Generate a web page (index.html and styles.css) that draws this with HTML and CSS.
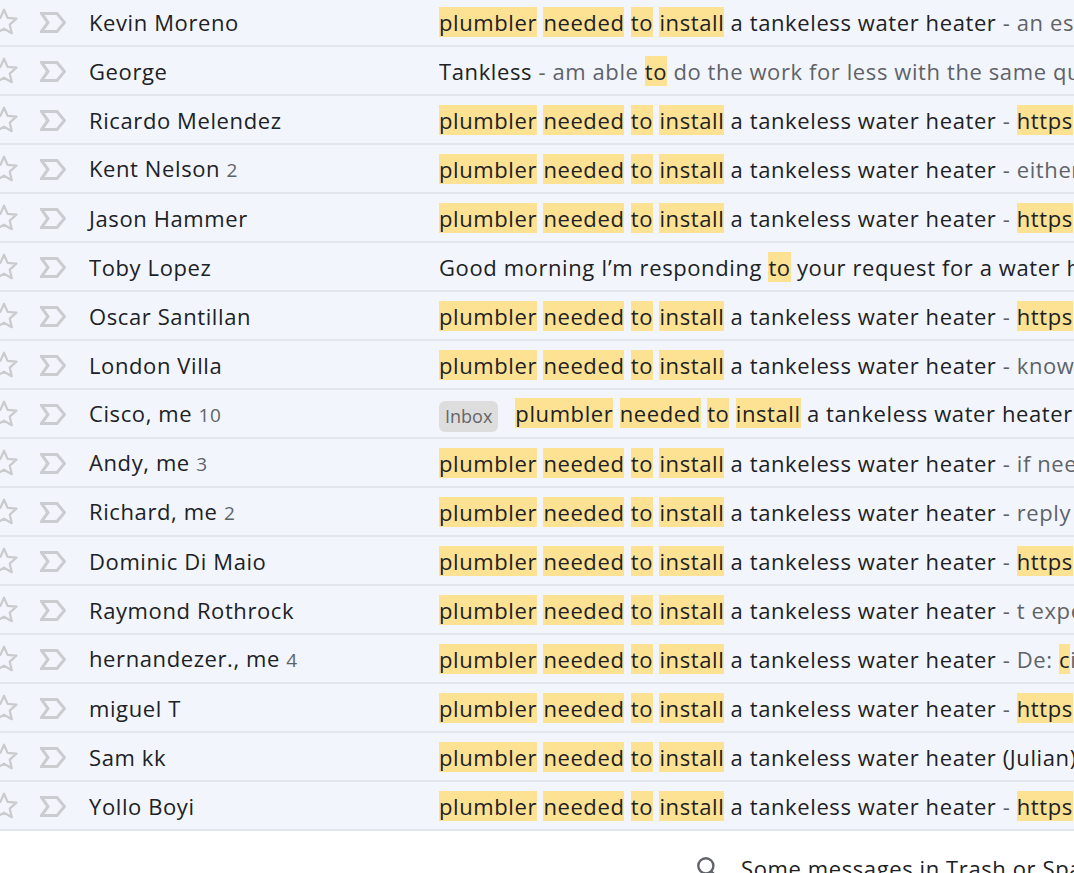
FILE: index.html
```html
<!DOCTYPE html>
<html lang="en">
<head>
  <meta charset="UTF-8" />
  <title>Search results</title>
  <link rel="stylesheet" href="styles.css">
</head>
<body>
  <div class="list">
    <div class="row">
      <span class="star"><svg viewBox="0 0 24 24"><path d="M12 2.8l2.7 6.1 6.6.6-5 4.4 1.5 6.5L12 17l-5.8 3.4 1.5-6.5-5-4.4 6.6-.6z"/></svg></span>
      <span class="imp"><svg viewBox="0 0 26 21"><path d="M1.5 1.5H17L24.5 10.5L17 19.5H1.5L8 10.5Z"/></svg></span>
      <span class="sender">Kevin Moreno</span>
      <span class="body"><span class="hl">plumbler</span> <span class="hl">needed</span> <span class="hl">to</span> <span class="hl">install</span> a tankeless water heater<span class="snip"> - an estimate for the tankless water heater install</span></span>
    </div>
    <div class="row">
      <span class="star"><svg viewBox="0 0 24 24"><path d="M12 2.8l2.7 6.1 6.6.6-5 4.4 1.5 6.5L12 17l-5.8 3.4 1.5-6.5-5-4.4 6.6-.6z"/></svg></span>
      <span class="imp"><svg viewBox="0 0 26 21"><path d="M1.5 1.5H17L24.5 10.5L17 19.5H1.5L8 10.5Z"/></svg></span>
      <span class="sender">George</span>
      <span class="body">Tankless<span class="snip"> - am able <span class="hl">to</span> do the work for less with the same quality</span></span>
    </div>
    <div class="row">
      <span class="star"><svg viewBox="0 0 24 24"><path d="M12 2.8l2.7 6.1 6.6.6-5 4.4 1.5 6.5L12 17l-5.8 3.4 1.5-6.5-5-4.4 6.6-.6z"/></svg></span>
      <span class="imp"><svg viewBox="0 0 26 21"><path d="M1.5 1.5H17L24.5 10.5L17 19.5H1.5L8 10.5Z"/></svg></span>
      <span class="sender">Ricardo Melendez</span>
      <span class="body"><span class="hl">plumbler</span> <span class="hl">needed</span> <span class="hl">to</span> <span class="hl">install</span> a tankeless water heater<span class="snip"> - <span class="hl">https</span>://www.example.com</span></span>
    </div>
    <div class="row">
      <span class="star"><svg viewBox="0 0 24 24"><path d="M12 2.8l2.7 6.1 6.6.6-5 4.4 1.5 6.5L12 17l-5.8 3.4 1.5-6.5-5-4.4 6.6-.6z"/></svg></span>
      <span class="imp"><svg viewBox="0 0 26 21"><path d="M1.5 1.5H17L24.5 10.5L17 19.5H1.5L8 10.5Z"/></svg></span>
      <span class="sender">Kent Nelson <span class="count">2</span></span>
      <span class="body"><span class="hl">plumbler</span> <span class="hl">needed</span> <span class="hl">to</span> <span class="hl">install</span> a tankeless water heater<span class="snip"> - either way works for me</span></span>
    </div>
    <div class="row">
      <span class="star"><svg viewBox="0 0 24 24"><path d="M12 2.8l2.7 6.1 6.6.6-5 4.4 1.5 6.5L12 17l-5.8 3.4 1.5-6.5-5-4.4 6.6-.6z"/></svg></span>
      <span class="imp"><svg viewBox="0 0 26 21"><path d="M1.5 1.5H17L24.5 10.5L17 19.5H1.5L8 10.5Z"/></svg></span>
      <span class="sender">Jason Hammer</span>
      <span class="body"><span class="hl">plumbler</span> <span class="hl">needed</span> <span class="hl">to</span> <span class="hl">install</span> a tankeless water heater<span class="snip"> - <span class="hl">https</span>://www.example.com</span></span>
    </div>
    <div class="row">
      <span class="star"><svg viewBox="0 0 24 24"><path d="M12 2.8l2.7 6.1 6.6.6-5 4.4 1.5 6.5L12 17l-5.8 3.4 1.5-6.5-5-4.4 6.6-.6z"/></svg></span>
      <span class="imp"><svg viewBox="0 0 26 21"><path d="M1.5 1.5H17L24.5 10.5L17 19.5H1.5L8 10.5Z"/></svg></span>
      <span class="sender">Toby Lopez</span>
      <span class="body">Good morning I’m responding <span class="hl">to</span> your request for a water heater install</span>
    </div>
    <div class="row">
      <span class="star"><svg viewBox="0 0 24 24"><path d="M12 2.8l2.7 6.1 6.6.6-5 4.4 1.5 6.5L12 17l-5.8 3.4 1.5-6.5-5-4.4 6.6-.6z"/></svg></span>
      <span class="imp"><svg viewBox="0 0 26 21"><path d="M1.5 1.5H17L24.5 10.5L17 19.5H1.5L8 10.5Z"/></svg></span>
      <span class="sender">Oscar Santillan</span>
      <span class="body"><span class="hl">plumbler</span> <span class="hl">needed</span> <span class="hl">to</span> <span class="hl">install</span> a tankeless water heater<span class="snip"> - <span class="hl">https</span>://www.example.com</span></span>
    </div>
    <div class="row">
      <span class="star"><svg viewBox="0 0 24 24"><path d="M12 2.8l2.7 6.1 6.6.6-5 4.4 1.5 6.5L12 17l-5.8 3.4 1.5-6.5-5-4.4 6.6-.6z"/></svg></span>
      <span class="imp"><svg viewBox="0 0 26 21"><path d="M1.5 1.5H17L24.5 10.5L17 19.5H1.5L8 10.5Z"/></svg></span>
      <span class="sender">London Villa</span>
      <span class="body"><span class="hl">plumbler</span> <span class="hl">needed</span> <span class="hl">to</span> <span class="hl">install</span> a tankeless water heater<span class="snip"> - know what you need</span></span>
    </div>
    <div class="row">
      <span class="star"><svg viewBox="0 0 24 24"><path d="M12 2.8l2.7 6.1 6.6.6-5 4.4 1.5 6.5L12 17l-5.8 3.4 1.5-6.5-5-4.4 6.6-.6z"/></svg></span>
      <span class="imp"><svg viewBox="0 0 26 21"><path d="M1.5 1.5H17L24.5 10.5L17 19.5H1.5L8 10.5Z"/></svg></span>
      <span class="sender">Cisco, me <span class="count">10</span></span>
      <span class="body"><span class="chip">Inbox</span><span class="hl">plumbler</span> <span class="hl">needed</span> <span class="hl">to</span> <span class="hl">install</span> a tankeless water heater<span class="snip"> - thanks</span></span>
    </div>
    <div class="row">
      <span class="star"><svg viewBox="0 0 24 24"><path d="M12 2.8l2.7 6.1 6.6.6-5 4.4 1.5 6.5L12 17l-5.8 3.4 1.5-6.5-5-4.4 6.6-.6z"/></svg></span>
      <span class="imp"><svg viewBox="0 0 26 21"><path d="M1.5 1.5H17L24.5 10.5L17 19.5H1.5L8 10.5Z"/></svg></span>
      <span class="sender">Andy, me <span class="count">3</span></span>
      <span class="body"><span class="hl">plumbler</span> <span class="hl">needed</span> <span class="hl">to</span> <span class="hl">install</span> a tankeless water heater<span class="snip"> - if needed I can</span></span>
    </div>
    <div class="row">
      <span class="star"><svg viewBox="0 0 24 24"><path d="M12 2.8l2.7 6.1 6.6.6-5 4.4 1.5 6.5L12 17l-5.8 3.4 1.5-6.5-5-4.4 6.6-.6z"/></svg></span>
      <span class="imp"><svg viewBox="0 0 26 21"><path d="M1.5 1.5H17L24.5 10.5L17 19.5H1.5L8 10.5Z"/></svg></span>
      <span class="sender">Richard, me <span class="count">2</span></span>
      <span class="body"><span class="hl">plumbler</span> <span class="hl">needed</span> <span class="hl">to</span> <span class="hl">install</span> a tankeless water heater<span class="snip"> - reply</span></span>
    </div>
    <div class="row">
      <span class="star"><svg viewBox="0 0 24 24"><path d="M12 2.8l2.7 6.1 6.6.6-5 4.4 1.5 6.5L12 17l-5.8 3.4 1.5-6.5-5-4.4 6.6-.6z"/></svg></span>
      <span class="imp"><svg viewBox="0 0 26 21"><path d="M1.5 1.5H17L24.5 10.5L17 19.5H1.5L8 10.5Z"/></svg></span>
      <span class="sender">Dominic Di Maio</span>
      <span class="body"><span class="hl">plumbler</span> <span class="hl">needed</span> <span class="hl">to</span> <span class="hl">install</span> a tankeless water heater<span class="snip"> - <span class="hl">https</span>://www.example.com</span></span>
    </div>
    <div class="row">
      <span class="star"><svg viewBox="0 0 24 24"><path d="M12 2.8l2.7 6.1 6.6.6-5 4.4 1.5 6.5L12 17l-5.8 3.4 1.5-6.5-5-4.4 6.6-.6z"/></svg></span>
      <span class="imp"><svg viewBox="0 0 26 21"><path d="M1.5 1.5H17L24.5 10.5L17 19.5H1.5L8 10.5Z"/></svg></span>
      <span class="sender">Raymond Rothrock</span>
      <span class="body"><span class="hl">plumbler</span> <span class="hl">needed</span> <span class="hl">to</span> <span class="hl">install</span> a tankeless water heater<span class="snip"> - t expect</span></span>
    </div>
    <div class="row">
      <span class="star"><svg viewBox="0 0 24 24"><path d="M12 2.8l2.7 6.1 6.6.6-5 4.4 1.5 6.5L12 17l-5.8 3.4 1.5-6.5-5-4.4 6.6-.6z"/></svg></span>
      <span class="imp"><svg viewBox="0 0 26 21"><path d="M1.5 1.5H17L24.5 10.5L17 19.5H1.5L8 10.5Z"/></svg></span>
      <span class="sender">hernandezer., me <span class="count">4</span></span>
      <span class="body"><span class="hl">plumbler</span> <span class="hl">needed</span> <span class="hl">to</span> <span class="hl">install</span> a tankeless water heater<span class="snip"> - De: <span class="hl">c</span>isco</span></span>
    </div>
    <div class="row">
      <span class="star"><svg viewBox="0 0 24 24"><path d="M12 2.8l2.7 6.1 6.6.6-5 4.4 1.5 6.5L12 17l-5.8 3.4 1.5-6.5-5-4.4 6.6-.6z"/></svg></span>
      <span class="imp"><svg viewBox="0 0 26 21"><path d="M1.5 1.5H17L24.5 10.5L17 19.5H1.5L8 10.5Z"/></svg></span>
      <span class="sender">miguel T</span>
      <span class="body"><span class="hl">plumbler</span> <span class="hl">needed</span> <span class="hl">to</span> <span class="hl">install</span> a tankeless water heater<span class="snip"> - <span class="hl">https</span>://www.example.com</span></span>
    </div>
    <div class="row">
      <span class="star"><svg viewBox="0 0 24 24"><path d="M12 2.8l2.7 6.1 6.6.6-5 4.4 1.5 6.5L12 17l-5.8 3.4 1.5-6.5-5-4.4 6.6-.6z"/></svg></span>
      <span class="imp"><svg viewBox="0 0 26 21"><path d="M1.5 1.5H17L24.5 10.5L17 19.5H1.5L8 10.5Z"/></svg></span>
      <span class="sender">Sam kk</span>
      <span class="body"><span class="hl">plumbler</span> <span class="hl">needed</span> <span class="hl">to</span> <span class="hl">install</span> a tankeless water heater (Julian)</span>
    </div>
    <div class="row">
      <span class="star"><svg viewBox="0 0 24 24"><path d="M12 2.8l2.7 6.1 6.6.6-5 4.4 1.5 6.5L12 17l-5.8 3.4 1.5-6.5-5-4.4 6.6-.6z"/></svg></span>
      <span class="imp"><svg viewBox="0 0 26 21"><path d="M1.5 1.5H17L24.5 10.5L17 19.5H1.5L8 10.5Z"/></svg></span>
      <span class="sender">Yollo Boyi</span>
      <span class="body"><span class="hl">plumbler</span> <span class="hl">needed</span> <span class="hl">to</span> <span class="hl">install</span> a tankeless water heater<span class="snip"> - <span class="hl">https</span>://www.example.com</span></span>
    </div>
  </div>

  <div class="footer">
    <svg class="search" viewBox="0 0 24 24"><circle cx="10" cy="10" r="7"/><path d="M15 15l6 6"/></svg>
    <span>Some messages in Trash or Spam match your search. View messages</span>
  </div>
</body>
</html>
```

FILE: styles.css
```css
body {
  margin: 0;
  background-color: #fff;
  font-family: "Open Sans", Roboto, Arial, sans-serif;
  color: #202124;
  overflow: hidden;
}

.list {
  margin-top: -2px;
  margin-left: -10px;
}

.row {
  display: flex;
  align-items: center;
  height: 47px;
  border-bottom: 2px solid #e2e7ee;
  background-color: #f2f6fc;
  font-size: 22px;
  letter-spacing: 0.6px;
  white-space: nowrap;
  overflow: hidden;
}

.star {
  width: 32px;
  height: 32px;
  margin-left: -2px;
  flex: none;
}

.star svg {
  width: 32px;
  height: 32px;
  display: block;
  fill: none;
  stroke: #c9cbcd;
  stroke-width: 1.7;
  stroke-linejoin: round;
}

.imp {
  width: 26px;
  height: 21px;
  margin-left: 20px;
  margin-top: 2px;
  flex: none;
}

.imp svg {
  width: 26px;
  height: 21px;
  display: block;
  fill: none;
  stroke: #cacccf;
  stroke-width: 3;
  stroke-linejoin: miter;
}

.sender {
  width: 350px;
  margin-left: 23px;
  flex: none;
  line-height: 34px;
}

.count {
  font-size: 19px;
  color: #5f6368;
}

.body {
  flex: 1;
  overflow: hidden;
  line-height: 34px;
}

.snip {
  color: #5f6368;
}

.hl {
  background-color: #fde293;
  color: #202124;
}

.chip {
  display: inline-block;
  background-color: #dddddd;
  color: #666;
  font-size: 18px;
  letter-spacing: 0;
  line-height: 31px;
  padding: 0 6px;
  border-radius: 6px;
  margin-right: 17px;
  vertical-align: -1px;
}

.footer {
  display: flex;
  align-items: center;
  padding: 22px 0 0 695px;
  font-size: 22px;
  letter-spacing: 0.6px;
  color: #202124;
  white-space: nowrap;
}

.search {
  width: 26px;
  height: 26px;
  fill: none;
  stroke: #5f6368;
  stroke-width: 2.2;
  margin-right: 20px;
  flex: none;
}
```
